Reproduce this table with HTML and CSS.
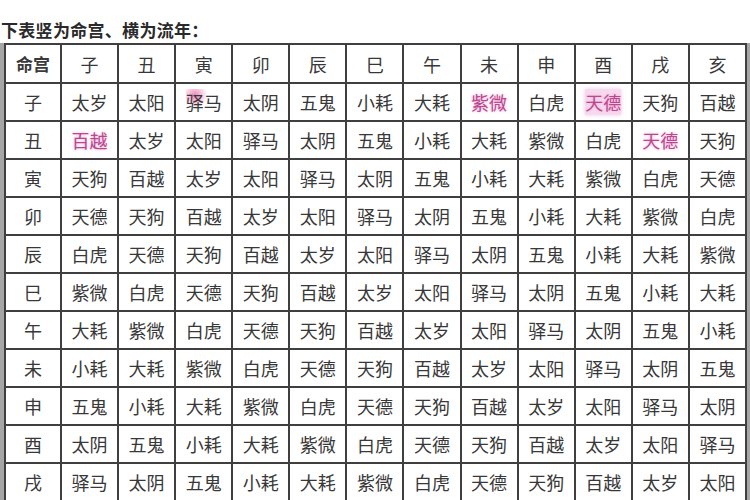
FILE: index.html
```html
<!DOCTYPE html>
<html lang="zh">
<head>
<meta charset="utf-8">
<link rel="stylesheet" href="styles.css">
</head>
<body>
<div class="title">下表竖为命宫、横为流年：</div>
<div class="frame">
<table class="grid">
<colgroup><col class="c0"><col span="12"></colgroup>
<tr class="head"><td class="corner">命宫</td><td>子</td><td>丑</td><td>寅</td><td>卯</td><td>辰</td><td>巳</td><td>午</td><td>未</td><td>申</td><td>酉</td><td>戌</td><td>亥</td></tr>
<tr><td>子</td><td>太岁</td><td>太阳</td><td><span class="smudge">驿马</span></td><td>太阴</td><td>五鬼</td><td>小耗</td><td>大耗</td><td><span class="pk">紫微</span></td><td>白虎</td><td><span class="pk hl">天德</span></td><td>天狗</td><td>百越</td></tr>
<tr><td>丑</td><td><span class="pk">百越</span></td><td>太岁</td><td>太阳</td><td>驿马</td><td>太阴</td><td>五鬼</td><td>小耗</td><td>大耗</td><td>紫微</td><td>白虎</td><td><span class="pk">天德</span></td><td>天狗</td></tr>
<tr><td>寅</td><td>天狗</td><td>百越</td><td>太岁</td><td>太阳</td><td>驿马</td><td>太阴</td><td>五鬼</td><td>小耗</td><td>大耗</td><td>紫微</td><td>白虎</td><td>天德</td></tr>
<tr><td>卯</td><td>天德</td><td>天狗</td><td>百越</td><td>太岁</td><td>太阳</td><td>驿马</td><td>太阴</td><td>五鬼</td><td>小耗</td><td>大耗</td><td>紫微</td><td>白虎</td></tr>
<tr><td>辰</td><td>白虎</td><td>天德</td><td>天狗</td><td>百越</td><td>太岁</td><td>太阳</td><td>驿马</td><td>太阴</td><td>五鬼</td><td>小耗</td><td>大耗</td><td>紫微</td></tr>
<tr><td>巳</td><td>紫微</td><td>白虎</td><td>天德</td><td>天狗</td><td>百越</td><td>太岁</td><td>太阳</td><td>驿马</td><td>太阴</td><td>五鬼</td><td>小耗</td><td>大耗</td></tr>
<tr><td>午</td><td>大耗</td><td>紫微</td><td>白虎</td><td>天德</td><td>天狗</td><td>百越</td><td>太岁</td><td>太阳</td><td>驿马</td><td>太阴</td><td>五鬼</td><td>小耗</td></tr>
<tr><td>未</td><td>小耗</td><td>大耗</td><td>紫微</td><td>白虎</td><td>天德</td><td>天狗</td><td>百越</td><td>太岁</td><td>太阳</td><td>驿马</td><td>太阴</td><td>五鬼</td></tr>
<tr><td>申</td><td>五鬼</td><td>小耗</td><td>大耗</td><td>紫微</td><td>白虎</td><td>天德</td><td>天狗</td><td>百越</td><td>太岁</td><td>太阳</td><td>驿马</td><td>太阴</td></tr>
<tr><td>酉</td><td>太阴</td><td>五鬼</td><td>小耗</td><td>大耗</td><td>紫微</td><td>白虎</td><td>天德</td><td>天狗</td><td>百越</td><td>太岁</td><td>太阳</td><td>驿马</td></tr>
<tr><td>戌</td><td>驿马</td><td>太阴</td><td>五鬼</td><td>小耗</td><td>大耗</td><td>紫微</td><td>白虎</td><td>天德</td><td>天狗</td><td>百越</td><td>太岁</td><td>太阳</td></tr>
</table>
</div>
</body>
</html>
```
FILE: styles.css
```css
html, body {
  margin: 0;
  padding: 0;
  background: #ffffff;
}
body {
  width: 750px;
  height: 500px;
  overflow: hidden;
  font-family: "Noto Sans CJK SC", "Noto Sans", sans-serif;
  color: #333333;
}
.title {
  padding: 19px 0 0 1px;
  line-height: 22px;
  font-size: 17px;
  font-weight: 700;
  color: #2a2a2a;
  letter-spacing: 0.3px;
}
.frame {
  margin-top: 2px;
  width: 743px;
  border-left: 4px solid #a6a6a6;
  border-right: 3px solid #a6a6a6;
}
.grid {
  width: 743px;
  table-layout: fixed;
  border-collapse: collapse;
}
.c0 {
  width: 56px;
}
.grid td {
  border: 2px solid #3f3f3f;
  padding: 0;
  height: 36px;
  text-align: center;
  vertical-align: middle;
  font-size: 18px;
  line-height: 20px;
  color: #383838;
  white-space: nowrap;
  overflow: hidden;
}
.grid .head td {
  height: 37px;
}
.grid .corner {
  font-weight: 700;
  font-size: 17px;
  color: #3a3a3a;
}
.pk {
  color: #b8488f;
  text-shadow: 0 0 3px #f2a6d2;
}
.hl {
  background: rgba(230, 150, 210, 0.35);
  box-shadow: 0 0 4px rgba(230, 150, 210, 0.5);
}
.smudge {
  background: radial-gradient(circle at 25% 25%, rgba(230, 90, 160, 0.75) 0, rgba(230, 90, 160, 0.35) 20%, rgba(230, 90, 160, 0) 38%);
}
```
